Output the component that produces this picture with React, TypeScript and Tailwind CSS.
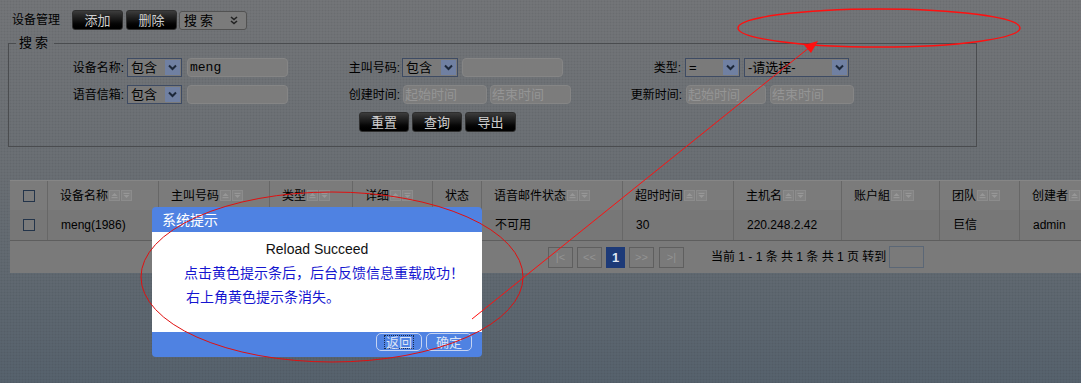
import React from "react";

function BlackBtn({ children, className }: { children: React.ReactNode; className: string }) {
  return (
    <div
      className={`flex items-center justify-center h-[20px] rounded-[3px] border border-[#2e2e2e] bg-linear-to-b from-[#3c3c3c] via-[#161616] to-[#000000] text-[13px] leading-none text-[#cfcfcf] ${className}`}
    >
      {children}
    </div>
  );
}

function Chevron() {
  return (
    <svg width="9" height="7" viewBox="0 0 9 7">
      <path d="M1 1.5 L4.5 5 L8 1.5" stroke="#1d283a" strokeWidth="2" fill="none" />
    </svg>
  );
}

function Sel({ text, className }: { text: string; className: string }) {
  return (
    <div className={`flex items-center h-[19px] border border-[#3e4b63] bg-[#7a7a7a] ${className}`}>
      <span className="flex-1 pl-[3px] text-[13px] leading-none text-black whitespace-nowrap">{text}</span>
      <span className="w-[15px] h-[15px] mr-[1px] bg-[#7080a2] flex items-center justify-center">
        <Chevron />
      </span>
    </div>
  );
}

function Inp({ value, placeholder, className }: { value?: string; placeholder?: string; className: string }) {
  return (
    <div
      className={`flex items-center h-[19px] rounded-[4px] border border-[#858585] bg-[#7c7c7c] ${className}`}
    >
      {value ? (
        <span className="pl-[2px] text-[13px] leading-none text-black font-['Liberation_Mono',monospace]">{value}</span>
      ) : placeholder ? (
        <span className="pl-[1px] text-[13px] leading-none text-[#959595]">{placeholder}</span>
      ) : null}
    </div>
  );
}

function Sort() {
  return (
    <span className="inline-flex items-center gap-[1px] ml-[1px]">
      <span className="w-[11px] h-[11px] border border-[#8c8c8c] bg-[#838383] flex items-center justify-center">
        <svg width="7" height="7" viewBox="0 0 7 7">
          <path d="M0.5 4 L3.5 1 L6.5 4Z" fill="#979797" />
          <rect x="0.5" y="5" width="6" height="1.2" fill="#979797" />
        </svg>
      </span>
      <span className="w-[11px] h-[11px] border border-[#8c8c8c] bg-[#838383] flex items-center justify-center">
        <svg width="7" height="7" viewBox="0 0 7 7">
          <rect x="0.5" y="0.8" width="6" height="1.2" fill="#979797" />
          <path d="M0.5 3 L3.5 6 L6.5 3Z" fill="#979797" />
        </svg>
      </span>
    </span>
  );
}

function CheckBox() {
  return <span className="w-[12px] h-[12px] border border-[#23344a] bg-[#7b7b7b]" />;
}

function PagerBtn({ children }: { children: React.ReactNode }) {
  return (
    <div className="flex items-center justify-center h-[21px] border border-[#5f5f5f] text-[11px] leading-none text-[#939393] font-['Liberation_Sans',sans-serif] w-[25px]">
      {children}
    </div>
  );
}

const cols = "grid grid-cols-[38px_111px_111px_83px_80px_49px_141px_111px_108px_98px_80px_130px]";

export default function App() {
  const headers: { t: string; sort: boolean }[] = [
    { t: "设备名称", sort: true },
    { t: "主叫号码", sort: true },
    { t: "类型", sort: true },
    { t: "详细", sort: true },
    { t: "状态", sort: false },
    { t: "语音邮件状态", sort: true },
    { t: "超时时间", sort: true },
    { t: "主机名", sort: true },
    { t: "账户組", sort: true },
    { t: "团队", sort: true },
    { t: "创建者", sort: true },
  ];
  const row = ["meng(1986)", "", "", "", "", "不可用", "30", "220.248.2.42", "", "巨信", "admin"];

  return (
    <div className="relative w-[1081px] h-[383px] overflow-hidden font-['Liberation_Sans','Noto_Sans_CJK_SC',sans-serif] text-[12px] text-black bg-[radial-gradient(rgba(0,0,0,0.07)_0.7px,transparent_1.2px),linear-gradient(180deg,#737578_0%,#6a6f74_45%,#56626d_100%)] [background-size:3px_3px,100%_100%]">
      {/* toolbar */}
      <div className="flex items-center pt-[10px] pl-[12px]">
        <span className="text-[12px] leading-none mr-[12px]">设备管理</span>
        <BlackBtn className="w-[51px]">添加</BlackBtn>
        <BlackBtn className="w-[51px] ml-[3px]">删除</BlackBtn>
        <div className="ml-[2px] w-[68px] h-[19px] flex items-center rounded-[3px] border border-[#525252] bg-[#7b7b7b]">
          <span className="pl-[4px] flex-1 text-[13px] leading-none tracking-[3px]">搜索</span>
          <svg width="8" height="9" viewBox="0 0 8 9" className="mr-[8px]">
            <path d="M1 1 L4 3.5 L7 1 M1 5 L4 7.5 L7 5" stroke="#222" strokeWidth="1.6" fill="none" />
          </svg>
        </div>
      </div>

      {/* search fieldset */}
      <fieldset className="mt-[5px] ml-[8px] w-[969px] border border-[#4a4c4f] pb-[14px]">
        <legend className="ml-[7px] px-[3px] text-[13px] leading-[16px] tracking-[3px]">搜索</legend>
        <div className="flex flex-col gap-[8px] pt-[7px]">
          {/* row1 */}
          <div className="flex items-center h-[19px]">
            <div className="w-[117px] text-right pr-[2px] leading-none">设备名称:</div>
            <Sel text="包含" className="w-[55px] ml-[1px]" />
            <Inp value="meng" className="w-[101px] ml-[5px]" />
            <div className="w-[113px] text-right pr-[1px] leading-none">主叫号码:</div>
            <Sel text="包含" className="w-[56px] ml-[1px]" />
            <Inp className="w-[101px] ml-[4px]" />
            <div className="w-[119px] text-right pr-[1px] leading-none">类型:</div>
            <Sel text="=" className="w-[55px] ml-[3px]" />
            <Sel text="-请选择-" className="w-[105px] ml-[4px]" />
          </div>
          {/* row2 */}
          <div className="flex items-center h-[19px]">
            <div className="w-[117px] text-right pr-[2px] leading-none">语音信箱:</div>
            <Sel text="包含" className="w-[55px] ml-[1px]" />
            <Inp className="w-[101px] ml-[5px]" />
            <div className="w-[113px] text-right pr-[1px] leading-none">创建时间:</div>
            <Inp placeholder="起始时间" className="w-[84px] ml-[2px]" />
            <Inp placeholder="结束时间" className="w-[81px] ml-[3px]" />
            <div className="w-[112px] text-right pr-[1px] leading-none">更新时间:</div>
            <Inp placeholder="起始时间" className="w-[80px] ml-[3px]" />
            <Inp placeholder="结束时间" className="w-[84px] ml-[4px]" />
          </div>
          {/* buttons */}
          <div className="flex items-center pl-[350px] gap-[3px]">
            <BlackBtn className="w-[50px]">重置</BlackBtn>
            <BlackBtn className="w-[50px]">查询</BlackBtn>
            <BlackBtn className="w-[51px]">导出</BlackBtn>
          </div>
        </div>
      </fieldset>

      {/* table */}
      <div className="mt-[33px] ml-[10px] w-[1140px] bg-[#7a7a7a] border-t border-[#868686]">
        <div className={`${cols} h-[29px] bg-[#7b7b7b]`}>
          <div className="flex items-center justify-center border-r border-[#676767]">
            <CheckBox />
          </div>
          {headers.map((h, i) => (
            <div key={i} className="flex items-center pl-[12px] border-r border-[#676767] whitespace-nowrap">
              <span className="leading-none">{h.t}</span>
              {h.sort && <Sort />}
            </div>
          ))}
        </div>
        <div className={`${cols} h-[31px] bg-[#777777] border-b border-[#5e5e5e]`}>
          <div className="flex items-center justify-center border-r border-[#676767]">
            <CheckBox />
          </div>
          {row.map((c, i) => (
            <div key={i} className="flex items-center pl-[13px] border-r border-[#676767] whitespace-nowrap">
              <span className="leading-none">{c}</span>
            </div>
          ))}
        </div>
        <div className="h-[32px] flex items-center pl-[538px] bg-[#7a7a7a]">
          <div className="flex items-center gap-[4px]">
            <PagerBtn>|&lt;</PagerBtn>
            <PagerBtn>&lt;&lt;</PagerBtn>
            <div className="w-[19px] h-[21px] bg-[#1d3a78] flex items-center justify-center text-[13px] font-bold text-[#dfe6f3] leading-none">
              1
            </div>
            <PagerBtn>&gt;&gt;</PagerBtn>
            <div className="ml-[1px]">
              <PagerBtn>&gt;|</PagerBtn>
            </div>
          </div>
          <span className="ml-[27px] leading-none whitespace-pre">当前 1 - 1 条 共 1 条 共 1 页 转到</span>
          <div className="ml-[3px] w-[35px] h-[22px] border border-[#5b6776] bg-[#7a7a7a]" />
        </div>
      </div>

      {/* dialog */}
      <div className="absolute left-[152px] top-[207px] w-[330px] rounded-[4px] overflow-hidden bg-[#4f82e2] font-['Liberation_Sans','Noto_Sans_CJK_SC',sans-serif]">
        <div className="h-[25px] flex items-center pl-[10px] text-[14px] text-white leading-none">系统提示</div>
        <div className="h-[100px] bg-white flex flex-col">
          <div className="pt-[10px] text-center text-[14px] leading-none text-[#111]">Reload Succeed</div>
          <div className="pt-[10px] pl-[32px] text-[14px] leading-none text-[#1515d0]">点击黄色提示条后，后台反馈信息重载成功！</div>
          <div className="pt-[10px] pl-[34px] text-[14px] leading-none text-[#1515d0]">右上角黄色提示条消失。</div>
        </div>
        <div className="h-[25px] flex items-start justify-end pr-[10px] pt-[1px] gap-[4px]">
          <div className="w-[46px] h-[18px] rounded-[5px] border border-[#c5d3f2] flex items-center justify-center">
            <div className="border border-dotted border-[#1a2a4a] px-[1px] h-[14px] flex items-center text-[13px] leading-none text-[#dbe4f7]">返回</div>
          </div>
          <div className="w-[46px] h-[18px] rounded-[5px] border border-[#c5d3f2] flex items-center justify-center text-[13px] leading-none text-[#dbe4f7]">
            确定
          </div>
        </div>
      </div>

      {/* red annotations */}
      <svg className="absolute inset-0 pointer-events-none" width="1081" height="383" viewBox="0 0 1081 383">
        <ellipse cx="879" cy="28" rx="141" ry="19" fill="none" stroke="#ff1010" strokeWidth="1.4" />
        <ellipse cx="332" cy="277" rx="191" ry="85" fill="none" stroke="#e01010" strokeWidth="1" />
        <line x1="472" y1="319" x2="810" y2="47" stroke="#ff1010" strokeWidth="1" />
        <path d="M818 41 L804 45 L811 53 Z" fill="#ff1010" />
      </svg>
    </div>
  );
}
